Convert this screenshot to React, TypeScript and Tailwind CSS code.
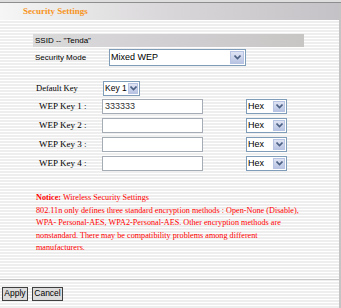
import React from "react";

const serif = "font-['Liberation_Serif','Times_New_Roman',serif]";
const sans = "font-['Liberation_Sans',Arial,sans-serif]";

function Chevron() {
  return (
    <svg width="7" height="5" viewBox="0 0 7 5">
      <path d="M0.5 0.5 L3.5 3.5 L6.5 0.5" stroke="#4d6185" strokeWidth="1.6" fill="none" />
    </svg>
  );
}

function Select({ value, width, height = 15, btn = 14, small = false }: { value: string; width: number; height?: number; btn?: number; small?: boolean }) {
  return (
    <div
      className={`flex items-stretch border border-[#7f9db9] bg-white ${sans} ${small ? "text-[8.5px]" : "text-[9px]"} text-black whitespace-nowrap`}
      style={{ width, height }}
    >
      <div className="flex-1 flex items-center pl-[1px] leading-none min-w-0">{value}</div>
      <div
        className="m-px flex items-center justify-center bg-gradient-to-b from-[#dfe4f3] to-[#b9c4e3] border border-[#b7c3e2] shrink-0"
        style={{ width: btn }}
      >
        <Chevron />
      </div>
    </div>
  );
}

function Input({ value = "" }: { value?: string }) {
  return (
    <div className={`w-[101px] h-[15px] border border-[#a5acb5] bg-white ${sans} text-[9px] flex items-center pl-[2px] text-[#333]`}>
      {value}
    </div>
  );
}

export default function App() {
  const keys = ["333333", "", "", ""];
  return (
    <div className="w-[341px] h-[308px] overflow-hidden flex flex-col bg-white">
      <div className="h-[2px] bg-[#dedede] shrink-0" />
      <div className="h-px bg-[#8e8e8e] shrink-0" />
      <div className="flex flex-1 min-h-0">
        <div className="flex-1 flex flex-col min-w-0">
          <div className="h-[17px] shrink-0 bg-gradient-to-r from-[#f6f6f6] via-[#d8d6d8] to-[#c4c2c6] flex items-center pl-[23px]">
            <span className={`${serif} text-[9px] font-bold text-[#f7941d] leading-none`}>Security Settings</span>
          </div>
          <div className="flex-1 flex flex-col bg-[repeating-linear-gradient(to_bottom,#ffffff_0px,#ffffff_1px,#eeeeee_1px,#eeeeee_3px)]">
            <div className="h-[14px] shrink-0" />
            <div className={`ml-[33px] w-[271px] h-[13px] shrink-0 bg-gradient-to-r from-[#dadada] via-[#d2cfd3] to-[#c8c6c4] flex items-center pl-[2px] ${sans} text-[8px] text-black leading-none`}>
              SSID -- "Tenda"
            </div>
            <div className="mt-[2px] flex items-center h-[17px] shrink-0">
              <div className={`w-[109px] pl-[35px] ${sans} text-[8px] text-black`}>Security Mode</div>
              <Select value="Mixed WEP" width={137} height={17} />
            </div>
            <div className="mt-[15px] flex items-center h-[15px] shrink-0">
              <div className={`w-[103px] pl-[36px] ${serif} text-[8.5px] text-black`}>Default Key</div>
              <Select value="Key 1" width={37} btn={10} small />
            </div>
            <div className="mt-[3px] flex flex-col gap-[4px] shrink-0">
              {keys.map((k, i) => (
                <div key={i} className="flex items-center h-[15px]">
                  <div className={`w-[102px] pl-[39px] ${serif} text-[9px] text-black whitespace-nowrap`}>WEP Key {i + 1} :</div>
                  <Input value={k} />
                  <div className="ml-[43px]">
                    <Select value="Hex" width={41} btn={12} />
                  </div>
                </div>
              ))}
            </div>
            <div className={`mt-[21px] pl-[36px] ${serif} text-[8.2px] leading-[12.5px] text-[#ff0000] whitespace-nowrap shrink-0`}>
              <div><b>Notice:</b> Wireless Security Settings</div>
              <div>802.11n only defines three standard encryption methods : Open-None (Disable),</div>
              <div>WPA- Personal-AES, WPA2-Personal-AES. Other encryption methods are</div>
              <div>nonstandard. There may be compatibility problems among different</div>
              <div>manufacturers.</div>
            </div>
            <div className="mt-[24px] h-px bg-[#c8c8c8] shrink-0" />
            <div className="mt-[7px] flex gap-[4px] pl-[2px] shrink-0">
              <button className={`w-[26px] h-[14px] border border-[#404040] bg-[#dcdcdc] ${sans} text-[8.5px] leading-none text-black flex items-center justify-center`}>Apply</button>
              <button className={`w-[31px] h-[14px] border border-[#404040] bg-[#dcdcdc] ${sans} text-[8.5px] leading-none text-black flex items-center justify-center`}>Cancel</button>
            </div>
          </div>
        </div>
        <div className="w-[2px] bg-[#c4c4c4] shrink-0" />
      </div>
    </div>
  );
}
